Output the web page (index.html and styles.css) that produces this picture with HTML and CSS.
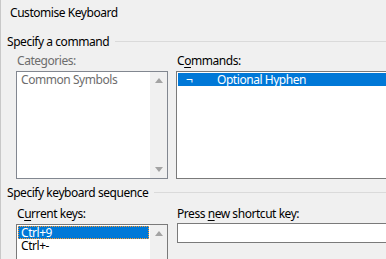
FILE: index.html
```
<!DOCTYPE html>
<html lang="en">
<head>
    <meta charset="UTF-8">
    <title>Customise Keyboard</title>
    <link rel="stylesheet" href="styles.css">
</head>
<body>
    <div class="dialog">
        <div class="title">Customise Keyboard</div>

        <div class="group-head">Specify a command</div>
        <div class="group-body">
            <div class="col">
                <div class="label disabled">Categories:</div>
                <div class="listbox tall disabled-box">
                    <div class="items">
                        <div class="item grey">Common Symbols</div>
                    </div>
                    <div class="scroll">
                        <span class="arrow up"></span>
                        <span class="arrow down"></span>
                    </div>
                </div>
            </div>
            <div class="col wide">
                <div class="label">C<u>o</u>mmands:</div>
                <div class="listbox tall">
                    <div class="items">
                        <div class="item selected"><span class="sym">¬</span>Optional Hyphen</div>
                    </div>
                </div>
            </div>
        </div>

        <div class="group-head second">Specify keyboard sequence</div>
        <div class="group-body">
            <div class="col">
                <div class="label">C<u>u</u>rrent keys:</div>
                <div class="listbox short">
                    <div class="items">
                        <div class="item selected focus">Ctrl+9</div>
                        <div class="item">Ctrl+-</div>
                    </div>
                    <div class="scroll">
                        <span class="arrow up"></span>
                    </div>
                </div>
            </div>
            <div class="col wide">
                <div class="label">Press <u>n</u>ew shortcut key:</div>
                <div class="textbox"></div>
            </div>
        </div>
    </div>
</body>
</html>
```

FILE: styles.css
```
html, body {
    margin: 0;
    padding: 0;
    overflow: hidden;
}
body {
    background-color: #f0f0f0;
    font-family: "Noto Sans", "Liberation Sans", sans-serif;
    font-size: 12px;
    line-height: 15px;
    letter-spacing: -0.45px;
    color: #000;
}
.dialog {
    width: 600px;
    height: 259px;
    border-left: 1px solid #c8c8c8;
    padding-left: 6px;
}
.title {
    padding-top: 5px;
    padding-left: 3px;
    margin-bottom: 14px;
}
.group-head {
    display: flex;
    align-items: center;
    gap: 6px;
}
.group-head::after {
    content: "";
    flex: 1;
    height: 1px;
    background: #dadada;
}
.group-head.second {
    margin-top: 6px;
}
.group-body {
    display: flex;
    gap: 8px;
    padding-left: 9px;
}
.col {
    width: 152px;
}
.col.wide {
    width: 240px;
}
.label {
    margin-top: 4px;
    padding-left: 1px;
}
.group-head.second + .group-body .label {
    margin-top: 6px;
}
.label u {
    text-decoration-thickness: 1px;
    text-underline-offset: 2px;
}
.disabled, .grey {
    color: #6d6d6d;
}
.listbox {
    margin-top: 3px;
    background: #fff;
    border: 1px solid #7a7a7a;
    display: flex;
    box-sizing: border-box;
}
.disabled-box {
    border-color: #828790;
}
.listbox.tall {
    height: 108px;
}
.listbox.short {
    height: 60px;
}
.items {
    flex: 1;
    padding: 1px 1px 0 1px;
}
.item {
    height: 13px;
    line-height: 13px;
    padding-left: 3px;
    box-sizing: border-box;
}
.item.selected {
    background: #0078d7;
    color: #fff;
}
.item.focus {
    outline: 1px dotted #ff9a2e;
    outline-offset: -1px;
}
.sym {
    display: inline-block;
    width: 36px;
    padding-left: 5px;
    box-sizing: border-box;
}
.scroll {
    width: 17px;
    background: #f0f0f0;
    display: flex;
    flex-direction: column;
    justify-content: space-between;
    align-items: center;
    padding: 6px 0 6px;
    box-sizing: border-box;
}
.arrow {
    width: 0;
    height: 0;
    border-left: 4px solid transparent;
    border-right: 4px solid transparent;
}
.arrow.up {
    border-bottom: 5px solid #a3a3a3;
}
.arrow.down {
    border-top: 5px solid #a3a3a3;
}
.textbox {
    margin-top: 2px;
    margin-left: 1px;
    height: 20px;
    background: #fff;
    border: 1px solid #7a7a7a;
    box-sizing: border-box;
}
```
